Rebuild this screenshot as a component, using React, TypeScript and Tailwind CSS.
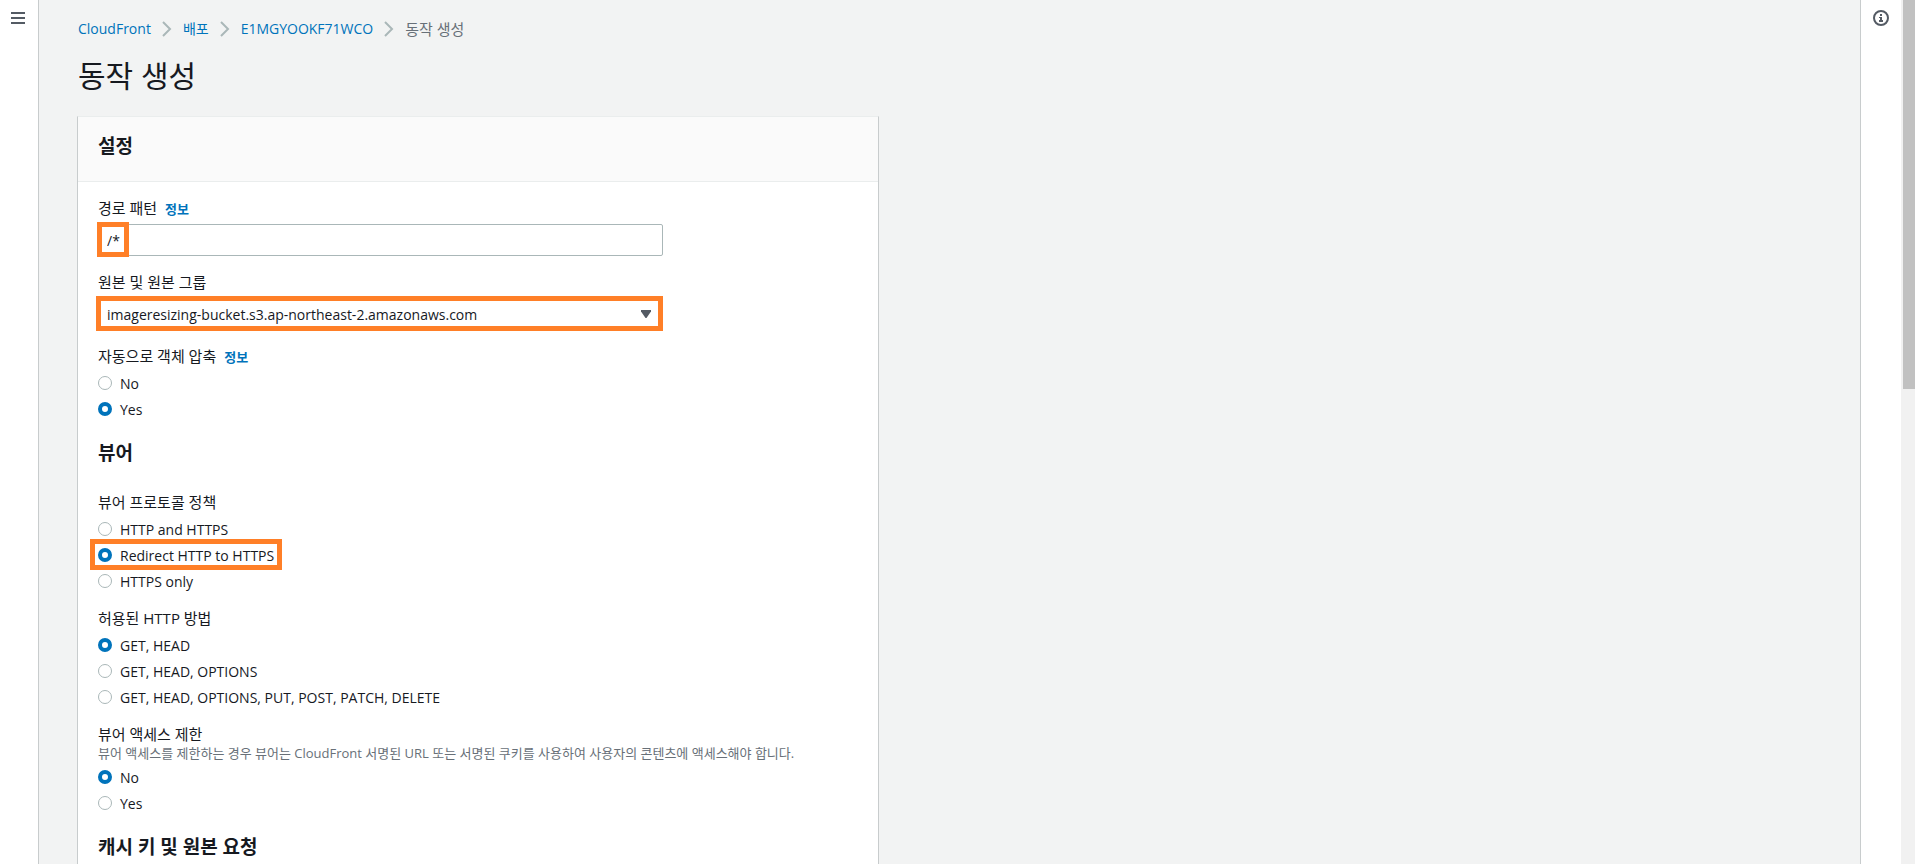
import React, { useState } from 'react';

interface Option {
  value: string;
  highlighted?: boolean;
}

interface RadioFieldProps {
  name: string;
  label: string;
  description?: string;
  info?: boolean;
  options: Option[];
  defaultValue: string;
}

const breadcrumbs = ['CloudFront', '배포', 'E1MGYOOKF71WCO'];

function InfoLink() {
  return (
    <a href="#info" className="ml-2 text-[13px] leading-none font-bold text-[#0073bb]">
      정보
    </a>
  );
}

function SectionTitle({ children }: { children: React.ReactNode }) {
  return <h2 className="mt-[22px] mb-[30px] text-[19px] leading-[22px] font-bold">{children}</h2>;
}

function RadioField({ name, label, description, info, options, defaultValue }: RadioFieldProps) {
  const [selected, setSelected] = useState(defaultValue);

  return (
    <fieldset>
      <legend className={`h-4 text-[15px] leading-4 ${description ? '' : 'mb-2'}`}>
        {label}
        {info && <InfoLink />}
      </legend>
      {description && (
        <p className="mb-[2px] text-[13px] leading-[22px] text-[#687078]">{description}</p>
      )}
      <div className="flex flex-col items-start gap-1">
        {options.map((option) => (
          <label key={option.value} className="relative flex h-[22px] items-center gap-2">
            <input
              type="radio"
              name={name}
              value={option.value}
              checked={selected === option.value}
              onChange={() => setSelected(option.value)}
              className="size-[14px] appearance-none rounded-full border border-[#aab7b8] bg-white checked:border-4 checked:border-[#0073bb]"
            />
            {option.value}
            {option.highlighted && (
              <span className="pointer-events-none absolute -inset-x-2 -top-[5px] -bottom-1 border-5 border-[#ff7f27]" />
            )}
          </label>
        ))}
      </div>
    </fieldset>
  );
}

export default function App() {
  const [pathPattern, setPathPattern] = useState('/*');

  return (
    <div className="flex h-screen overflow-hidden bg-[#f2f3f3] font-['Open_Sans','Noto_Sans_CJK_KR',sans-serif] text-[14px] text-[#16191f]">
      {/* Left rail */}
      <aside className="w-[39px] shrink-0 border-r border-[#c8cccd] bg-white">
        <button type="button" aria-label="메뉴" className="mt-3 ml-[11px] block">
          <svg width="14" height="12" viewBox="0 0 14 12" fill="#545b64">
            <path d="M0 0h14v2H0zM0 5h14v2H0zM0 10h14v2H0z" />
          </svg>
        </button>
      </aside>

      {/* Content */}
      <main className="min-w-0 flex-1 overflow-hidden px-[38px] pt-[18px]">
        <nav>
          <ol className="flex h-[22px] items-center pl-px leading-[22px]">
            {breadcrumbs.map((item) => (
              <li key={item} className="flex items-center">
                <a href="#" className="text-[#0073bb]">
                  {item}
                </a>
                <svg
                  width="10"
                  height="16"
                  viewBox="0 0 10 16"
                  fill="none"
                  stroke="#aab7b8"
                  strokeWidth="2"
                  className="mx-[11px]"
                >
                  <path d="M1 1l7 7-7 7" />
                </svg>
              </li>
            ))}
            <li className="text-[15px] text-[#687078]">동작 생성</li>
          </ol>
        </nav>
        <h1 className="mt-4 mb-5 h-10 pl-px text-[30px] leading-10 font-normal">동작 생성</h1>

        <form className="max-w-[802px] border border-t-[#eaeded] border-x-[#c8cccd] bg-white">
          <header className="border-b border-[#eaeded] bg-[#fafafa] px-5 pt-[18px] pb-6">
            <h2 className="text-[19px] leading-[22px] font-bold">설정</h2>
          </header>

          <div className="px-5 pt-[18px] pb-5">
            <div className="flex flex-col gap-[18px]">
              <div className="grid grid-cols-12 gap-x-5">
                <div className="col-span-9">
                  <div className="mb-2 h-4 text-[15px] leading-4">
                    <label htmlFor="path-pattern">경로 패턴</label>
                    <InfoLink />
                  </div>
                  <div className="relative">
                    <input
                      id="path-pattern"
                      type="text"
                      value={pathPattern}
                      onChange={(e) => setPathPattern(e.target.value)}
                      className="block h-8 w-full rounded-xs border border-[#aab7b8] bg-white px-2"
                    />
                    <span className="pointer-events-none absolute -top-[2px] -left-px h-[35px] w-8 border-5 border-[#ff7f27]" />
                  </div>
                </div>
              </div>

              <div className="grid grid-cols-12 gap-x-5">
                <div className="col-span-9">
                  <label htmlFor="origin" className="mb-2 block h-4 text-[15px] leading-4">
                    원본 및 원본 그룹
                  </label>
                  <div className="relative">
                    <select
                      id="origin"
                      className="block h-8 w-full appearance-none rounded-xs border border-[#aab7b8] bg-white px-2"
                    >
                      <option>imageresizing-bucket.s3.ap-northeast-2.amazonaws.com</option>
                    </select>
                    <svg
                      width="10"
                      height="8"
                      viewBox="0 0 10 8"
                      fill="#545b64"
                      className="pointer-events-none absolute top-3 right-3"
                    >
                      <path d="M0 0h10v1.5L5.5 8h-1L0 1.5z" />
                    </svg>
                    <span className="pointer-events-none absolute -top-[2px] right-0 -bottom-px -left-[2px] border-5 border-[#ff7f27]" />
                  </div>
                </div>
              </div>

              <RadioField
                name="compress"
                label="자동으로 객체 압축"
                info
                options={[{ value: 'No' }, { value: 'Yes' }]}
                defaultValue="Yes"
              />
            </div>

            <SectionTitle>뷰어</SectionTitle>
            <div className="flex flex-col gap-[18px]">
              <RadioField
                name="viewer-protocol"
                label="뷰어 프로토콜 정책"
                options={[
                  { value: 'HTTP and HTTPS' },
                  { value: 'Redirect HTTP to HTTPS', highlighted: true },
                  { value: 'HTTPS only' },
                ]}
                defaultValue="Redirect HTTP to HTTPS"
              />
              <RadioField
                name="http-methods"
                label="허용된 HTTP 방법"
                options={[
                  { value: 'GET, HEAD' },
                  { value: 'GET, HEAD, OPTIONS' },
                  { value: 'GET, HEAD, OPTIONS, PUT, POST, PATCH, DELETE' },
                ]}
                defaultValue="GET, HEAD"
              />
              <RadioField
                name="viewer-access"
                label="뷰어 액세스 제한"
                description="뷰어 액세스를 제한하는 경우 뷰어는 CloudFront 서명된 URL 또는 서명된 쿠키를 사용하여 사용자의 콘텐츠에 액세스해야 합니다."
                options={[{ value: 'No' }, { value: 'Yes' }]}
                defaultValue="No"
              />
            </div>

            <SectionTitle>캐시 키 및 원본 요청</SectionTitle>
          </div>
        </form>
      </main>

      {/* Right rail */}
      <aside className="w-[41px] shrink-0 border-l border-[#c8cccd] bg-white">
        <button type="button" aria-label="정보" className="mt-[10px] ml-3 block">
          <svg width="16" height="16" viewBox="0 0 16 16" fill="none">
            <circle cx="8" cy="8" r="7" stroke="#545b64" strokeWidth="2" />
            <path d="M7 4h2v2H7zM6 7h3v3h1v2H6v-2h1V8H6z" fill="#545b64" />
          </svg>
        </button>
      </aside>

      {/* Scrollbar */}
      <div className="w-[14px] shrink-0 bg-[#f1f1f1] pl-[2px]">
        <div className="h-[45%] bg-[#c1c1c1]" />
      </div>
    </div>
  );
}
